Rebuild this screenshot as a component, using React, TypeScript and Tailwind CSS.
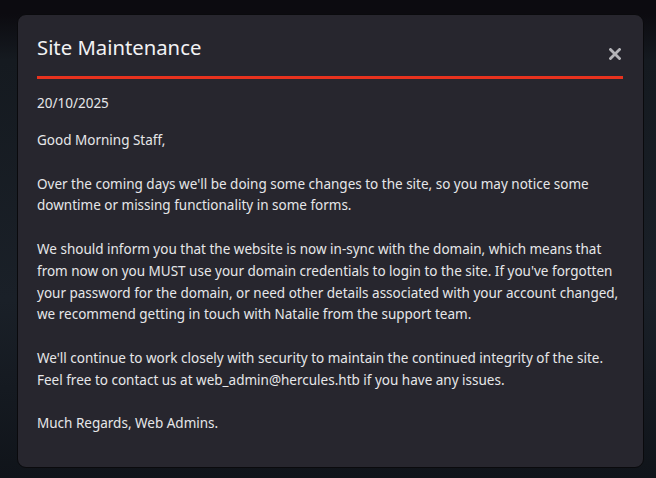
const paragraphs = [
  'Good Morning Staff,',
  "Over the coming days we'll be doing some changes to the site, so you may notice some downtime or missing functionality in some forms.",
  "We should inform you that the website is now in-sync with the domain, which means that from now on you MUST use your domain credentials to login to the site. If you've forgotten your password for the domain, or need other details associated with your account changed, we recommend getting in touch with Natalie from the support team.",
  "We'll continue to work closely with security to maintain the continued integrity of the site. Feel free to contact us at web_admin@hercules.htb if you have any issues.",
  'Much Regards, Web Admins.',
];

const App = () => {
  return (
    <div className="w-[656px] h-[478px] overflow-hidden bg-[linear-gradient(180deg,#0c0b10_0px,#0c0b10_14px,#151a20_60px,#1a2028_300px,#10141a_478px)] pt-[14px] pl-[17px] font-['Noto_Sans',sans-serif]">
      <div className="w-[627px] h-[454px] rounded-[9px] border border-[#0a0a0d] bg-[#27262e] pl-[19px] pr-[19px] pt-[18px] text-[#e6e6e9]">
        <div className="flex items-end justify-between pr-[1px]">
          <h2 className="text-[20.3px] leading-[28px] text-[#f2f2f4]">Site Maintenance</h2>
          <button className="mb-[1px] mr-[2px] text-[#b4b4b8]">
            <svg width="12" height="12" viewBox="0 0 12 12">
              <path d="M1.5 1.5 L10.5 10.5 M10.5 1.5 L1.5 10.5" stroke="currentColor" strokeWidth="2.8" strokeLinecap="square" />
            </svg>
          </button>
        </div>
        <div className="mt-[15px] mr-[1px] h-[3px] bg-[#e8321e]" />
        <p className="mt-[13px] text-[13.5px] leading-[22px]">20/10/2025</p>
        <div className="mt-[16px] text-[13.5px] leading-[21.8px]">
          {paragraphs.map((text, i) => (
            <p key={i} className="mb-[21.8px]">
              {text}
            </p>
          ))}
        </div>
      </div>
    </div>
  );
};

export default App;
